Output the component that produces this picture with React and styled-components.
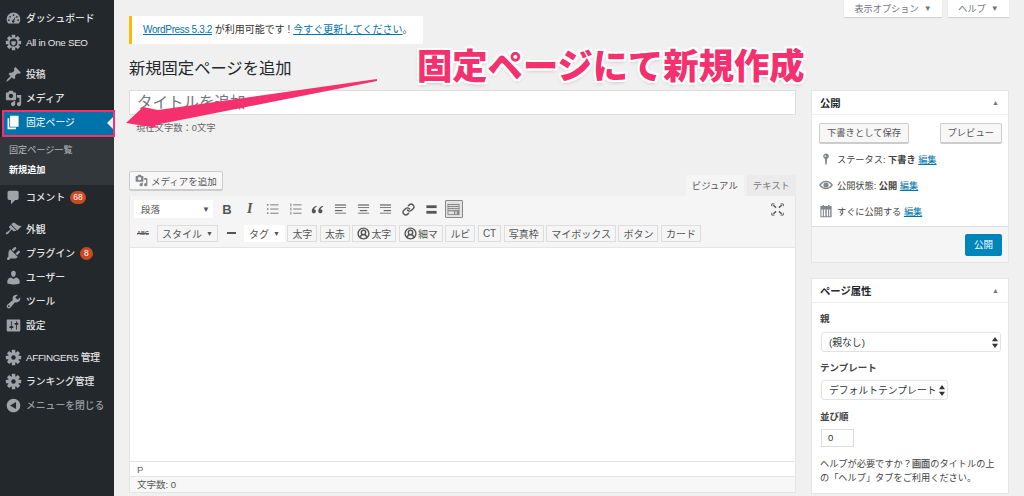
import styled, { createGlobalStyle } from 'styled-components';
import { Link, CircleUserRound } from 'lucide-react';

const GlobalStyle = createGlobalStyle`
  html, body { margin: 0; padding: 0; }
  body {
    width: 1024px;
    height: 496px;
    overflow: hidden;
    background: #f0f0f0;
    font-family: "Liberation Sans", "Noto Sans CJK JP", sans-serif;
    font-size: 10px;
    color: #444;
  }
`;

const Page = styled.div`
  position: relative;
  display: flex;
  width: 1024px;
  height: 496px;
  overflow: hidden;
`;

const Sidebar = styled.nav`
  flex: 0 0 114px;
  background: #23282d;
  padding-top: 6px;
`;

const MenuItem = styled.div`
  display: flex;
  align-items: center;
  height: 24px;
  padding-left: 5px;
  gap: 4px;
  font-size: 9.8px;
  font-weight: 500;
  color: ${p => (p.$dim ? '#9a9ea2' : '#e4e5e6')};
  margin-top: ${p => p.$gap || 0}px;
  letter-spacing: ${p => (p.$latin ? '-0.3px' : '0')};
`;

const MenuIcon = styled.svg`
  width: 17px;
  height: 17px;
  flex: none;
  fill: #9ea3a8;
`;

const CurrentItem = styled.div`
  position: relative;
  display: flex;
  align-items: center;
  gap: 4px;
  height: 27px;
  width: 113px;
  margin: 0 -1px 0 2px;
  padding: 0 0 3px 1px;
  box-sizing: border-box;
  background: #0073aa;
  border: 2px solid #f5306f;
  color: #fff;
  font-size: 9.8px;
  svg { fill: #fff; }
  &::after {
    content: '';
    position: absolute;
    right: 0;
    top: 5px;
    border: 6px solid transparent;
    border-right-color: #f0f0f0;
    border-left-width: 0;
  }
`;

const SubMenu = styled.div`
  background: #32373c;
  height: 48px;
  box-sizing: border-box;
  padding: 3px 0 0 9px;
`;

const SubItem = styled.div`
  height: 20px;
  line-height: 20px;
  font-size: 9.1px;
  color: ${p => (p.$active ? '#fff' : '#b4b9be')};
  font-weight: ${p => (p.$active ? 700 : 400)};
`;

const Badge = styled.span`
  display: inline-block;
  min-width: 7px;
  height: 13px;
  line-height: 13px;
  padding: 0 3px;
  margin-left: 1px;
  border-radius: 7px;
  background: #ca4a1f;
  color: #fff;
  font-size: 8.5px;
  text-align: center;
`;

const Main = styled.main`
  flex: 1;
  display: flex;
  flex-direction: column;
  min-width: 0;
`;

const ScreenMeta = styled.div`
  display: flex;
  justify-content: flex-end;
  gap: 6px;
  padding-right: 15px;
  height: 16px;
`;

const MetaTab = styled.div`
  display: flex;
  align-items: center;
  justify-content: center;
  gap: 5px;
  width: ${p => p.$w}px;
  height: 17px;
  padding-bottom: 1px;
  box-sizing: border-box;
  background: #fff;
  box-shadow: 0 1px 1px rgba(0, 0, 0, 0.12);
  font-size: 9.2px;
  color: #72777c;
  &::after { content: '▼'; font-size: 8px; }
`;

const Columns = styled.div`
  display: flex;
  padding-left: 15px;
`;

const Left = styled.div`
  flex: 0 0 667px;
`;

const Right = styled.aside`
  flex: 0 0 198px;
  margin-left: 15px;
  padding-top: 74px;
`;

const Notice = styled.div`
  width: 294px;
  height: 28px;
  line-height: 28px;
  background: #fff;
  border-left: 3px solid #ffb900;
  padding-left: 11px;
  font-size: 10px;
  color: #333;
  box-sizing: border-box;
  white-space: nowrap;
`;

const A = styled.a`
  color: #0073aa;
  text-decoration: underline;
  letter-spacing: ${p => (p.$tight ? '-0.35px' : '0')};
`;

const Title = styled.h1`
  margin: 11px 0 0;
  height: 26px;
  line-height: 26px;
  font-size: 16.3px;
  font-weight: 400;
  color: #23282d;
`;

const TitleInput = styled.div`
  margin-top: 9px;
  height: 25px;
  line-height: 23px;
  box-sizing: border-box;
  background: #fff;
  border: 1px solid #ddd;
  padding-left: 7px;
  font-size: 15.5px;
  color: #72777c;
`;

const CharCount = styled.div`
  margin: 7px 0 0 7px;
  height: 12px;
  line-height: 12px;
  font-size: 9.3px;
  color: #666;
`;

const EditorHead = styled.div`
  display: flex;
  justify-content: space-between;
  margin-top: 37px;
  height: 25px;
`;

const MediaButton = styled.div`
  display: flex;
  align-items: center;
  gap: 3px;
  height: 20px;
  padding: 0 5px;
  box-sizing: border-box;
  background: #f7f7f7;
  border: 1px solid #ccc;
  border-bottom-width: 2px;
  border-radius: 2px;
  font-size: 9.5px;
  color: #555;
  svg { width: 13px; height: 13px; fill: #82878c; }
`;

const Tabs = styled.div`
  display: flex;
  gap: 3px;
  align-self: flex-end;
`;

const Tab = styled.div`
  height: 21px;
  line-height: 21px;
  padding: 0 6px;
  font-size: 9.4px;
  color: ${p => (p.$on ? '#555' : '#777')};
  background: ${p => (p.$on ? '#f5f5f5' : '#ebebeb')};
`;

const Editor = styled.div`
  border: 1px solid #e5e5e5;
  border-top: none;
  background: #fff;
`;

const Toolbar = styled.div`
  background: #f5f5f5;
  border-bottom: 1px solid #e5e5e5;
  padding: 2px 4px 3px;
`;

const ToolRow = styled.div`
  display: flex;
  align-items: center;
  height: 22px;
  margin-bottom: ${p => p.$mb || 0}px;
`;

const Format = styled.div`
  display: flex;
  justify-content: space-between;
  align-items: center;
  width: 79px;
  height: 18px;
  padding: 0 3px 0 7px;
  box-sizing: border-box;
  background: #fff;
  font-size: 9.5px;
  color: #555;
  margin-right: 5px;
  &::after { content: '▼'; font-size: 8px; }
`;

const Ico = styled.span`
  display: flex;
  align-items: center;
  justify-content: center;
  width: 18px;
  height: 18px;
  margin-right: 4.7px;
  color: #555;
  box-sizing: border-box;
  border: ${p => (p.$on ? '1px solid #888' : 'none')};
  border-radius: 1px;
  background: ${p => (p.$on ? '#e4e4e4' : 'transparent')};
  svg { width: 13px; height: 13px; }
`;

const BoldGlyph = styled.b`
  font-size: 13px;
  font-weight: 700;
`;

const ItalicGlyph = styled.i`
  font-family: "Liberation Serif", serif;
  font-size: 14px;
  font-weight: 700;
`;

const Spacer = styled.div`
  flex: 1;
`;

const Abc = styled.span`
  width: 20px;
  margin-left: 3px;
  font-size: 5.5px;
  font-weight: 700;
  color: #555;
  text-decoration: line-through;
`;

const Tag = styled.div`
  display: flex;
  align-items: center;
  justify-content: center;
  height: 17px;
  padding: 0 4px;
  margin-right: 2.5px;
  box-sizing: border-box;
  background: ${p => (p.$white ? '#fff' : '#f5f5f5')};
  border: 1px solid ${p => (p.$white ? '#fff' : '#ddd')};
  font-size: 10px;
  color: #555;
  white-space: nowrap;
  svg { width: 13px; height: 13px; margin-right: 1px; stroke-width: 2.6; }
`;

const Caret = styled.span`
  font-size: 7px;
  margin-left: 4px;
`;

const Dash = styled.div`
  width: 9px;
  height: 2px;
  background: #555;
  margin: 0 8px 0 6.5px;
`;

const Body = styled.div`
  height: 213px;
`;

const PathBar = styled.div`
  height: 15px;
  line-height: 15px;
  box-sizing: border-box;
  padding-left: 7px;
  font-size: 9.5px;
  color: #666;
  border-top: 1px solid #e5e5e5;
`;

const Footer = styled.div`
  height: 16px;
  line-height: 15px;
  box-sizing: border-box;
  padding-left: 7px;
  background: #f7f7f7;
  border-top: 1px solid #e5e5e5;
  font-size: 9.5px;
  color: #555;
`;

const Box = styled.section`
  background: #fff;
  border: 1px solid #e5e5e5;
  margin-bottom: 15px;
`;

const BoxHead = styled.div`
  display: flex;
  justify-content: space-between;
  align-items: center;
  height: 24px;
  padding: 0 9px 0 8px;
  box-sizing: border-box;
  border-bottom: 1px solid #eee;
  font-size: 10.3px;
  font-weight: 700;
  color: #23282d;
  &::after { content: '▲'; font-size: 7px; color: #72777c; }
`;

const BoxBody = styled.div`
  padding: ${p => p.$pad};
`;

const Buttons = styled.div`
  display: flex;
  justify-content: space-between;
  margin-bottom: 2px;
`;

const Btn = styled.div`
  height: 21px;
  line-height: 19px;
  padding: 0 7px;
  box-sizing: border-box;
  background: #f7f7f7;
  border: 1px solid #ccc;
  border-bottom-width: 2px;
  border-radius: 2px;
  font-size: 9.3px;
  color: #555;
`;

const Status = styled.div`
  display: flex;
  align-items: center;
  gap: 4px;
  height: 26px;
  font-size: 9.2px;
  color: #444;
  white-space: nowrap;
  svg { width: 14px; height: 14px; flex: none; fill: #82878c; }
  b { font-weight: 700; }
`;

const BoxFoot = styled.div`
  display: flex;
  justify-content: flex-end;
  align-items: center;
  height: 36px;
  box-sizing: border-box;
  padding-right: 6px;
  background: #f5f5f5;
  border-top: 1px solid #ddd;
`;

const Primary = styled.div`
  height: 22px;
  line-height: 22px;
  width: 37px;
  text-align: center;
  border-radius: 2px;
  background: #0085ba;
  color: #fff;
  font-size: 9.5px;
`;

const Label = styled.div`
  height: 12px;
  line-height: 12px;
  font-size: 9.5px;
  font-weight: 700;
  color: #444;
  margin: ${p => p.$top || 0}px 0 ${p => p.$bottom || 6}px 1px;
`;

const Select = styled.div`
  display: flex;
  justify-content: space-between;
  align-items: center;
  width: ${p => p.$w}px;
  height: 20px;
  margin-left: 2px;
  padding: 0 2px 0 7px;
  box-sizing: border-box;
  border: 1px solid #e2e2e2;
  border-radius: 3px;
  font-size: 9.8px;
  color: #32373c;
  white-space: nowrap;
  svg { width: 6px; height: 11px; flex: none; fill: #333; }
`;

const NumberBox = styled.div`
  width: 33px;
  height: 18px;
  line-height: 16px;
  margin-left: 2px;
  padding-left: 6px;
  box-sizing: border-box;
  border: 1px solid #ddd;
  font-size: 9.5px;
  color: #32373c;
`;

const Help = styled.p`
  margin: 10px 0 0 1px;
  font-size: 9.2px;
  line-height: 14px;
  color: #444;
  white-space: nowrap;
`;

const Mark = styled.span`
  background: #d8d8d8;
`;

const Callout = styled.div`
  position: absolute;
  left: 417px;
  top: 44px;
  font-family: "Noto Sans CJK JP", sans-serif;
  font-size: 35.3px;
  line-height: 40px;
  font-weight: 900;
  color: #f5306f;
  white-space: nowrap;
  text-shadow: 2px 0 #fff, -2px 0 #fff, 0 2px #fff, 0 -2px #fff, 2px 2px #fff, -2px 2px #fff, 2px -2px #fff, -2px -2px #fff, 0 2px 4px rgba(0, 0, 0, 0.25);
`;

const Arrow = styled.svg`
  position: absolute;
  left: 0;
  top: 0;
  pointer-events: none;
`;

// dashicon shapes, 20x20
const paths = {
  post: 'M10.44 3.02l1.82-1.82 6.36 6.35-1.83 1.82c-1.05-.68-2.48-.57-3.41.36l-.75.75c-.92.93-1.04 2.35-.35 3.41l-1.83 1.82-2.41-2.41-2.8 2.79c-.42.42-3.38 2.71-3.8 2.29s1.86-3.39 2.28-3.81l2.79-2.79L4.1 9.36l1.83-1.82c1.05.69 2.48.57 3.4-.36l.75-.75c.93-.92 1.05-2.35.36-3.41z',
  media: 'M13 11V4c0-.55-.45-1-1-1h-1.67L9 1H5L3.67 3H2c-.55 0-1 .45-1 1v7c0 .55.45 1 1 1h10c.55 0 1-.45 1-1zM7 4.5c1.38 0 2.5 1.12 2.5 2.5S8.38 9.5 7 9.5 4.5 8.38 4.5 7 5.62 4.5 7 4.5zM14 6h5v10.5c0 1.38-1.12 2.5-2.5 2.5S14 17.88 14 16.5s1.12-2.5 2.5-2.5c.17 0 .34.02.5.05V9h-3V6zm-4 8.05V13h2v3.5c0 1.38-1.12 2.5-2.5 2.5S7 17.88 7 16.5 8.12 14 9.5 14c.17 0 .34.02.5.05z',
  page: 'M6 15V2h10v13H6zm-1 1h8v2H3V5h2v11z',
  comment: 'M5 2h9c1.1 0 2 .9 2 2v7c0 1.1-.9 2-2 2h-2l-5 5v-5H5c-1.1 0-2-.9-2-2V4c0-1.1.9-2 2-2z',
  brush: 'M14.48 11.06L7.41 3.99l1.5-1.5c.5-.56 2.3-.47 3.51.32 1.21.8 1.43 1.28 2.91 2.1 1.18.64 2.45 1.26 4.45.85zm-.71.71L6.7 4.7 4.93 6.47c-.39.39-.39 1.02 0 1.41l1.06 1.06c.39.39.39 1.03 0 1.42-.6.6-1.43 1.11-2.21 1.69-.35.26-.7.53-1.01.84C1.43 13.23.4 14.7 1.13 15.43c.73.73 2.21-.3 3.55-1.65.31-.31.58-.66.84-1.01.58-.78 1.09-1.61 1.69-2.21.39-.39 1.02-.39 1.41 0l1.06 1.06c.39.39 1.02.39 1.41 0z',
  plugin: 'M13.11 4.36L9.87 7.6 8 5.73l3.24-3.24c.35-.34 1.05-.2 1.56.32.52.51.66 1.21.31 1.55zm-8 1.77l.91-1.12 9.01 9.01-1.19.84c-.71.71-2.63 1.16-3.82 1.16H6.14L4.9 17.26c-.59.59-1.54.59-2.12 0-.59-.58-.59-1.53 0-2.12l1.24-1.24v-3.88c0-1.13.4-3.19 1.09-3.89zm7.26 3.97l3.24-3.24c.34-.35 1.04-.21 1.55.31.52.51.66 1.21.31 1.55l-3.24 3.25z',
  user: 'M10 9.25c-2.27 0-2.73-3.44-2.73-3.44C7 4.02 7.82 2 9.97 2c2.16 0 2.98 2.02 2.71 3.81 0 0-.41 3.44-2.68 3.44zm0 2.57L12.72 10c2.39 0 4.52 2.33 4.52 4.53v2.49s-3.65 1.13-7.24 1.13c-3.65 0-7.24-1.13-7.24-1.13v-2.49c0-2.25 1.94-4.48 4.47-4.48z',
  tools: 'M16.68 9.77c-1.34 1.34-3.3 1.67-4.95.99l-5.41 6.52c-.99.99-2.59.99-3.58 0s-.99-2.59 0-3.57l6.52-5.42c-.68-1.65-.35-3.61.99-4.95 1.28-1.28 3.12-1.62 4.72-1.06l-2.89 2.89 2.82 2.82 2.86-2.87c.53 1.58.18 3.39-1.08 4.65zM3.81 16.21c.4.39 1.04.39 1.43 0 .4-.4.4-1.04 0-1.43-.39-.4-1.03-.4-1.43 0-.39.39-.39 1.03 0 1.43z',
  settings: 'M18 16V4c0-.55-.45-1-1-1H3c-.55 0-1 .45-1 1v12c0 .55.45 1 1 1h14c.55 0 1-.45 1-1zM8 11h1c.55 0 1 .45 1 1s-.45 1-1 1H8v1.5c0 .28-.22.5-.5.5s-.5-.22-.5-.5V13H6c-.55 0-1-.45-1-1s.45-1 1-1h1V5.5c0-.28.22-.5.5-.5s.5.22.5.5V11zm5-2h-1c-.55 0-1-.45-1-1s.45-1 1-1h1V5.5c0-.28.22-.5.5-.5s.5.22.5.5V7h1c.55 0 1 .45 1 1s-.45 1-1 1h-1v5.5c0 .28-.22.5-.5.5s-.5-.22-.5-.5V9z',
  collapse: 'M18 10c0-4.42-3.58-8-8-8s-8 3.58-8 8 3.58 8 8 8 8-3.58 8-8zm-5 4l-7-4 7-4v8z',
  gauge: 'M3.76 16h12.48c1.1-1.37 1.76-3.11 1.76-5 0-4.42-3.58-8-8-8s-8 3.58-8 8c0 1.89.66 3.63 1.76 5zM10 5a1 1 0 1 1 0 2 1 1 0 0 1 0-2zM6 7a1 1 0 1 1 0 2 1 1 0 0 1 0-2zM14 7a1 1 0 1 1 0 2 1 1 0 0 1 0-2zM4.500 11a1 1 0 1 1 0 2 1 1 0 0 1 0-2zM15.500 11a1 1 0 1 1 0 2 1 1 0 0 1 0-2zM12.500 7.500l-1.600 5.100a1.500 1.500 0 1 1-1.700-.5z',
};

const Dashicon = ({ name }) => (
  <MenuIcon viewBox="0 0 20 20"><path fillRule="evenodd" d={paths[name]} /></MenuIcon>
);

const Gear = ({ ring }) => (
  <MenuIcon viewBox="0 0 20 20">
    {[0, 45, 90, 135].map(a => <rect key={a} x="8" y="1" width="4" height="18" rx="0.6" transform={`rotate(${a} 10 10)`} />)}
    <circle cx="10" cy="10" r="6.4" />
    <circle cx="10" cy="10" r={ring ? 4.6 : 2.6} fill="#23282d" />
    {ring && <path d="M7.400 8.500h5.200v2c0 1.700-1.300 2.700-2.600 3-1.300-.3-2.600-1.300-2.600-3z" />}
  </MenuIcon>
);

const StatusPin = () => (
  <svg viewBox="0 0 20 20"><path d="M14 6c0-2.200-1.800-4-4-4S6 3.800 6 6c0 1.700 1 3.100 2.500 3.700L9 18h2l.5-8.300C13 9.100 14 7.700 14 6zm-5-1.500a1.200 1.200 0 1 1 0 2.400 1.200 1.200 0 0 1 0-2.400z" fillRule="evenodd" /></svg>
);

const EyeIcon = () => (
  <svg viewBox="0 0 20 20"><path fillRule="evenodd" d="M0 10c3-4.500 6.400-6 10-6s7 1.500 10 6c-3 4.500-6.400 6-10 6s-7-1.500-10-6zm2.600 0c2.300 3 4.900 4.300 7.400 4.300s5.100-1.300 7.400-4.300c-2.300-3-4.900-4.300-7.400-4.300S4.900 7 2.600 10zM10 6.300a3.700 3.700 0 1 1 0 7.400 3.700 3.700 0 0 1 0-7.400z" /></svg>
);

const CalendarIcon = () => (
  <svg viewBox="0 0 20 20">
    <path fillRule="evenodd" d="M2 3h3V1.500h2V3h6V1.500h2V3h3v16H2zm1.500 5v9.500h2V8zm3.500 0v9.500h2V8zm4 0v9.500h2V8zm3.500 0v9.500h1.500V8z" />
  </svg>
);

const UpDown = () => (
  <svg viewBox="0 0 6 11"><path d="M3 0l3 4.300H0zM3 11L0 6.700h6z" /></svg>
);

// tinymce toolbar icons
const Lines = ({ rows }) => (
  <svg viewBox="0 0 14 14" fill="#666">
    {rows.map(([x, w], i) => <rect key={i} x={x} y={1.500 + i * 3} width={w} height={i % 2 ? 0.9 : 1.3} />)}
  </svg>
);

const ListIcon = ({ numbered }) => (
  <svg viewBox="0 0 14 14" fill="#777">
    {[2, 6.5, 11].map(y => (
      <g key={y}>
        <rect x={numbered ? 1.500 : 1} y={y - (numbered ? 1.500 : 0.8)} width={numbered ? 1 : 1.6} height={numbered ? 3 : 1.6} />
        <rect x="4.500" y={y - 0.5} width="9" height="1" />
      </g>
    ))}
  </svg>
);

const QuoteIcon = () => (
  <svg viewBox="0 0 14 14" fill="#555">
    <path d="M6 3C3 4 .8 5.800.8 8.500c0 1.500 1 2.500 2.300 2.500s2.200-1 2.200-2.200-.9-2-2-2c.3-1 1.300-2 2.700-2.700zM13 3c-3 1-5.200 2.800-5.200 5.500 0 1.500 1 2.500 2.300 2.500s2.200-1 2.200-2.200-.9-2-2-2c.3-1 1.300-2 2.700-2.700z" />
  </svg>
);

const RuleIcon = () => (
  <svg viewBox="0 0 14 14" fill="#555">
    <rect x="1.500" y="2.500" width="11" height="3" />
    <rect x="1.500" y="8.500" width="11" height="3" />
  </svg>
);

const KitchenIcon = () => (
  <svg viewBox="0 0 14 14" fill="#666">
    <rect x="0.500" y="1" width="13" height="12" fill="#8a8a8a" />
    {[2.200, 4.400, 6.600].map(y => <rect key={y} x="1.500" y={y} width="11" height="1" fill="#e4e4e4" />)}
    <rect x="1.500" y="9" width="6" height="3" fill="#e4e4e4" />
    <rect x="9" y="9" width="1.500" height="3" fill="#e4e4e4" />
  </svg>
);

const ExpandIcon = () => (
  <svg viewBox="0 0 14 14" fill="none" stroke="#555" strokeWidth="1.500">
    <path d="M2.500 2.500L5.500 5M11.500 2.500L8.500 5M2.500 11.500L5.500 9M11.500 11.500L8.500 9" />
    <path d="M.8 1h3M.8 1v2.500M13.200 1h-3M13.200 1v2.500M.8 13h3M.8 13v-2.500M13.200 13h-3M13.200 13v-2.500" strokeWidth="1" />
  </svg>
);

export default function App() {
  return (
    <Page>
      <GlobalStyle />
      <Sidebar>
        <MenuItem><Dashicon name="gauge" />ダッシュボード</MenuItem>
        <MenuItem $latin><Gear ring />All in One SEO</MenuItem>
        <MenuItem $gap={8}><Dashicon name="post" />投稿</MenuItem>
        <MenuItem><Dashicon name="media" />メディア</MenuItem>
        <CurrentItem><Dashicon name="page" />固定ページ</CurrentItem>
        <SubMenu>
          <SubItem>固定ページ一覧</SubItem>
          <SubItem $active>新規追加</SubItem>
        </SubMenu>
        <MenuItem><Dashicon name="comment" />コメント<Badge>68</Badge></MenuItem>
        <MenuItem $gap={8}><Dashicon name="brush" />外観</MenuItem>
        <MenuItem><Dashicon name="plugin" />プラグイン<Badge>8</Badge></MenuItem>
        <MenuItem><Dashicon name="user" />ユーザー</MenuItem>
        <MenuItem><Dashicon name="tools" />ツール</MenuItem>
        <MenuItem><Dashicon name="settings" />設定</MenuItem>
        <MenuItem $gap={8} $latin><Gear />AFFINGER5 管理</MenuItem>
        <MenuItem><Gear />ランキング管理</MenuItem>
        <MenuItem $dim><Dashicon name="collapse" />メニューを閉じる</MenuItem>
      </Sidebar>
      <Main>
        <ScreenMeta>
          <MetaTab $w={98}>表示オプション</MetaTab>
          <MetaTab $w={61}>ヘルプ</MetaTab>
        </ScreenMeta>
        <Columns>
          <Left>
            <Notice><A $tight>WordPress 5.3.2</A> が利用可能です ! <A>今すぐ更新してください</A>。</Notice>
            <Title>新規固定ページを追加</Title>
            <TitleInput>タイトルを追加</TitleInput>
            <CharCount>現在文字数：0文字</CharCount>
            <EditorHead>
              <MediaButton>
                <svg viewBox="0 0 20 20"><path fillRule="evenodd" d={paths.media} /></svg>
                メディアを追加
              </MediaButton>
              <Tabs><Tab $on>ビジュアル</Tab><Tab>テキスト</Tab></Tabs>
            </EditorHead>
            <Editor>
              <Toolbar>
                <ToolRow $mb={2}>
                  <Format>段落</Format>
                  <Ico><BoldGlyph>B</BoldGlyph></Ico>
                  <Ico><ItalicGlyph>I</ItalicGlyph></Ico>
                  <Ico><ListIcon /></Ico>
                  <Ico><ListIcon numbered /></Ico>
                  <Ico><QuoteIcon /></Ico>
                  <Ico><Lines rows={[[1, 12], [1, 12], [1, 8], [1, 12]]} /></Ico>
                  <Ico><Lines rows={[[1, 12], [1, 12], [3, 8], [1, 12]]} /></Ico>
                  <Ico><Lines rows={[[1, 12], [1, 12], [5, 8], [1, 12]]} /></Ico>
                  <Ico><Link strokeWidth={2.6} /></Ico>
                  <Ico><RuleIcon /></Ico>
                  <Ico $on><KitchenIcon /></Ico>
                  <Spacer />
                  <Ico><ExpandIcon /></Ico>
                </ToolRow>
                <ToolRow>
                  <Abc>ABC</Abc>
                  <Tag>スタイル<Caret>▼</Caret></Tag>
                  <Dash />
                  <Tag $white>タグ<Caret>▼</Caret></Tag>
                  <Tag>太字</Tag>
                  <Tag>太赤</Tag>
                  <Tag><CircleUserRound />太字</Tag>
                  <Tag><CircleUserRound />細マ</Tag>
                  <Tag>ルビ</Tag>
                  <Tag>CT</Tag>
                  <Tag>写真枠</Tag>
                  <Tag>マイボックス</Tag>
                  <Tag>ボタン</Tag>
                  <Tag>カード</Tag>
                </ToolRow>
              </Toolbar>
              <Body />
              <PathBar>P</PathBar>
              <Footer>文字数: 0</Footer>
            </Editor>
          </Left>
          <Right>
            <Box>
              <BoxHead>公開</BoxHead>
              <BoxBody $pad="8px 6px 2px 7px">
                <Buttons><Btn>下書きとして保存</Btn><Btn>プレビュー</Btn></Buttons>
                <Status><StatusPin /><span>ステータス: <b>下書き</b> <A>編集</A></span></Status>
                <Status><EyeIcon /><span>公開状態: <b>公開</b> <A>編集</A></span></Status>
                <Status><CalendarIcon /><span>すぐに公開する <A>編集</A></span></Status>
              </BoxBody>
              <BoxFoot><Primary>公開</Primary></BoxFoot>
            </Box>
            <Box>
              <BoxHead>ページ属性</BoxHead>
              <BoxBody $pad="10px 7px 8px 7px">
                <Label $bottom={7}>親</Label>
                <Select $w={180}>(親なし)<UpDown /></Select>
                <Label $top={10}>テンプレート</Label>
                <Select $w={127}>デフォルトテンプレート<UpDown /></Select>
                <Label $top={11}>並び順</Label>
                <NumberBox>0</NumberBox>
                <Help>ヘルプが必要ですか？<Mark>画面</Mark>のタイトルの上<br />の「ヘルプ」タブをご利用ください。</Help>
              </BoxBody>
            </Box>
          </Right>
        </Columns>
      </Main>
      <Arrow width="1024" height="496" viewBox="0 0 1024 496">
        <polygon points="377,79 158,110 143,107 126,123 158,128 155,125 377,81" fill="#f5306f" />
      </Arrow>
      <Callout>固定ページにて新規作成</Callout>
    </Page>
  );
}
